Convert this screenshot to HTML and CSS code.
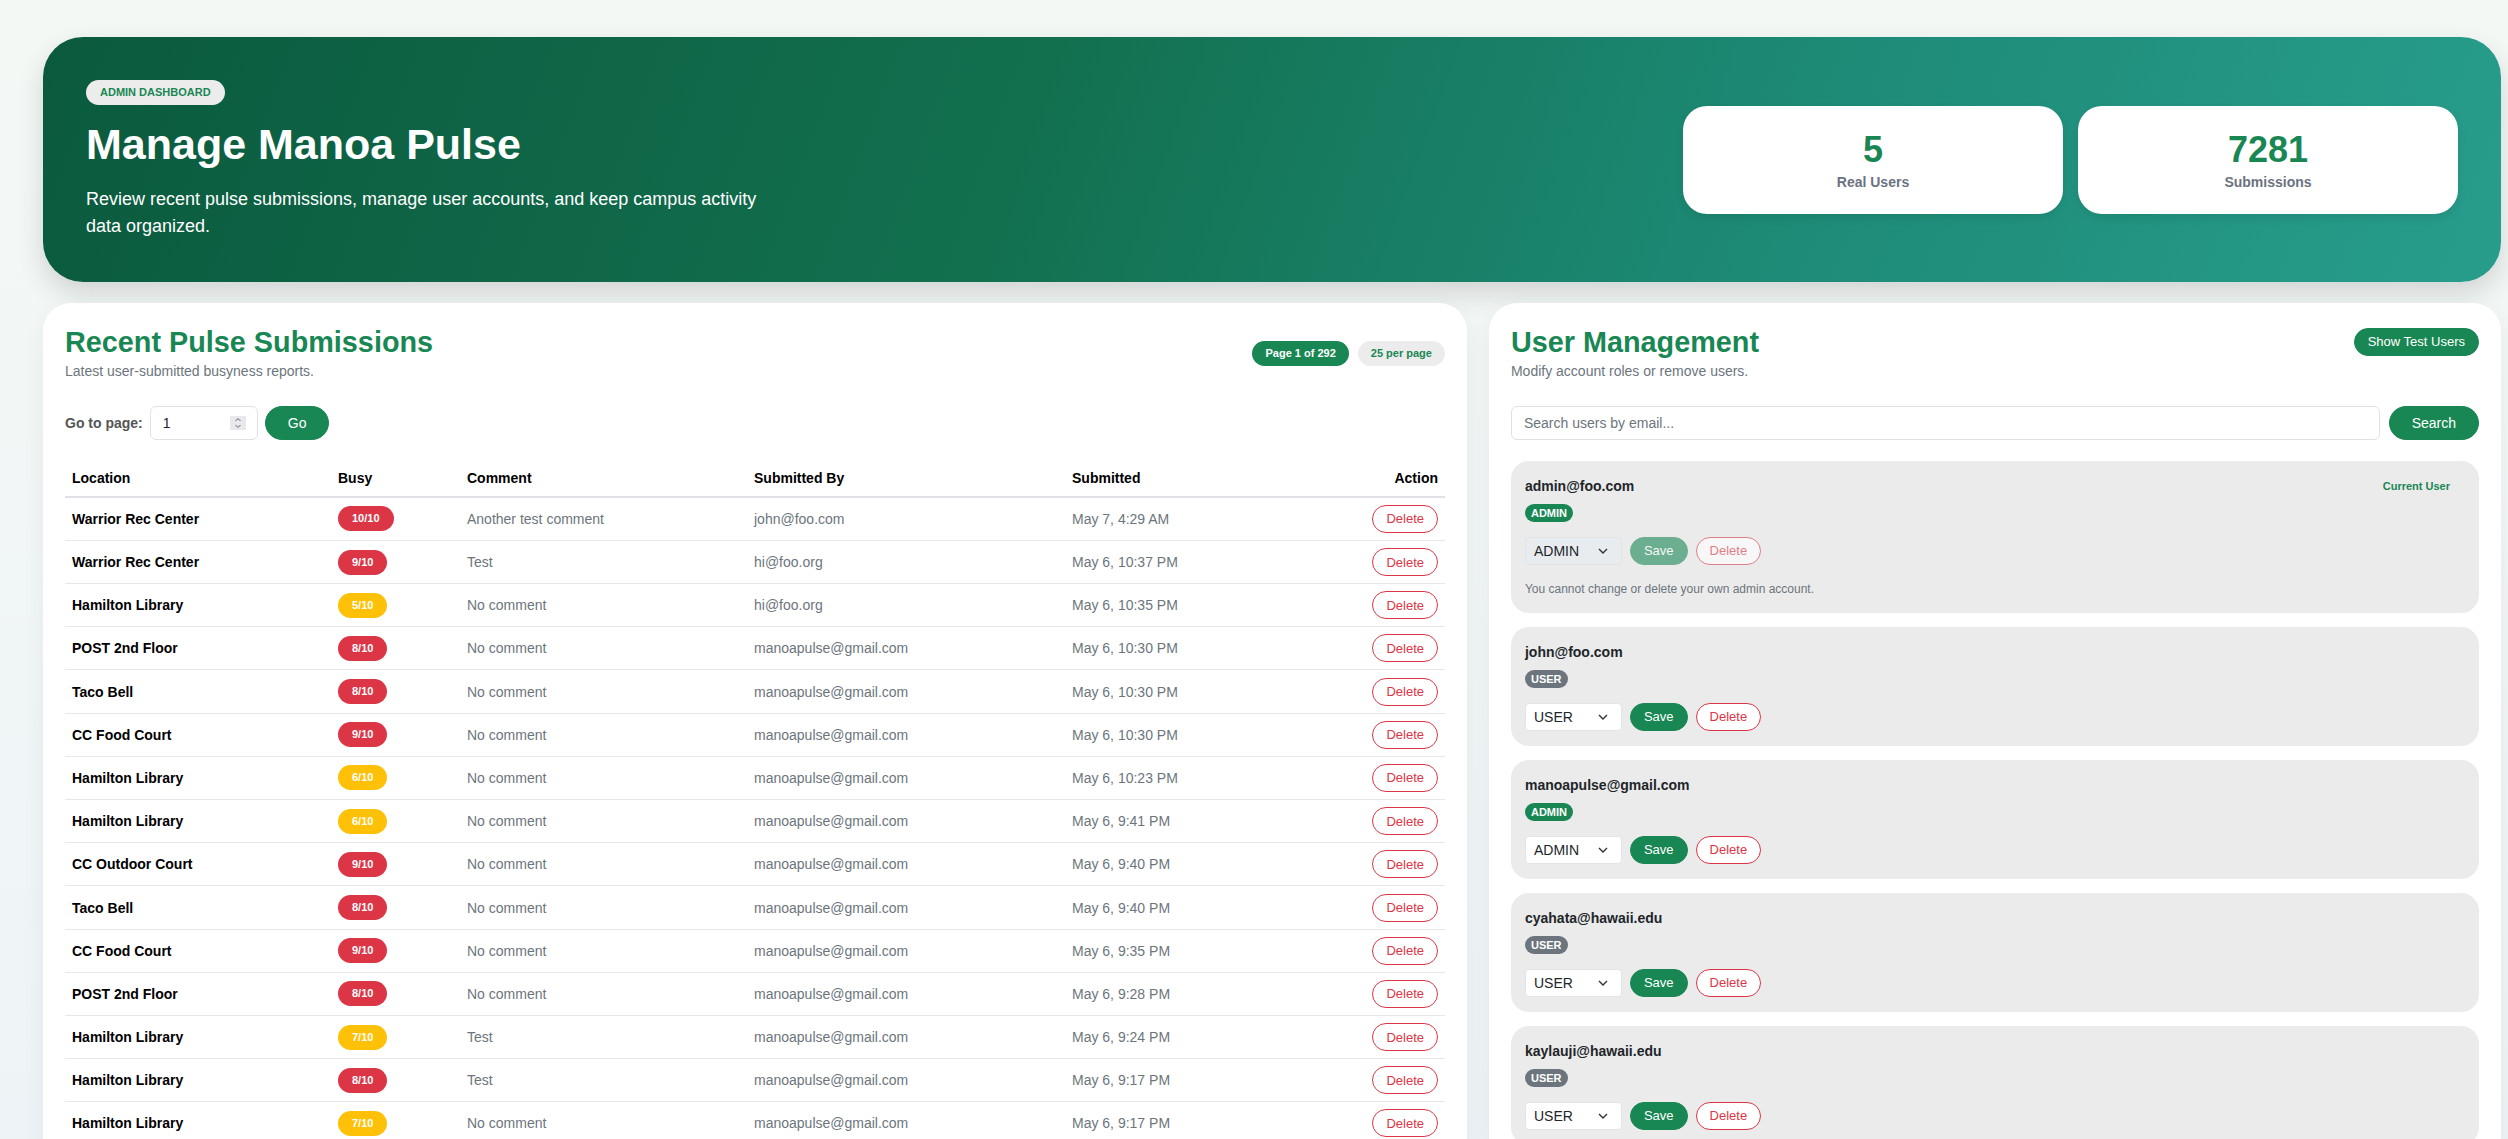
FILE: index.html
```html
<!DOCTYPE html>
<html>
<head>
  <title>Admin Dashboard - Manoa Pulse</title>
  <link rel="stylesheet" href="styles.css">
</head>
<body>
  <div class="page">
    <section class="hero">
      <div class="hero-text">
        <span class="hero-badge">ADMIN DASHBOARD</span>
        <h1>Manage Manoa Pulse</h1>
        <p>Review recent pulse submissions, manage user accounts, and keep campus activity data organized.</p>
      </div>
      <div class="stats">
        <div class="stat-card">
          <div class="stat-value">5</div>
          <div class="stat-label">Real Users</div>
        </div>
        <div class="stat-card">
          <div class="stat-value">7281</div>
          <div class="stat-label">Submissions</div>
        </div>
      </div>
    </section>

    <div class="columns">
      <section class="panel">
        <div class="panel-header">
          <div>
            <h2>Recent Pulse Submissions</h2>
            <p class="panel-sub">Latest user-submitted busyness reports.</p>
          </div>
          <div class="pager-pills">
            <span class="pill pill-green">Page 1 of 292</span>
            <span class="pill pill-grey">25 per page</span>
          </div>
        </div>

        <div class="goto-row">
          <label class="goto-label" for="pageInput">Go to page:</label>
          <span class="number-wrap">
            <input class="goto-input" id="pageInput" type="number" value="1" min="1" max="292">
            <svg class="spin" width="16" height="14" viewBox="0 0 16 14"><rect width="16" height="14" fill="#e9e9ed"/><path d="M5.5 5l2.5-2.5 2.5 2.5M5.5 9l2.5 2.5 2.5-2.5" fill="none" stroke="#6b6b6b" stroke-width="1"/></svg>
          </span>
          <button class="btn btn-green btn-wide">Go</button>
        </div>

        <table class="sub-table">
          <colgroup>
            <col style="width: 266px">
            <col style="width: 129px">
            <col style="width: 287px">
            <col style="width: 318px">
            <col style="width: 230px">
            <col style="width: 150px">
          </colgroup>
          <thead>
            <tr>
              <th>Location</th>
              <th>Busy</th>
              <th>Comment</th>
              <th>Submitted By</th>
              <th>Submitted</th>
              <th class="right">Action</th>
            </tr>
          </thead>
          <tbody>
            <tr><td class="loc">Warrior Rec Center</td><td><span class="busy high">10/10</span></td><td class="muted">Another test comment</td><td class="muted">john@foo.com</td><td class="muted">May 7, 4:29 AM</td><td class="right"><button class="btn btn-outline-red">Delete</button></td></tr>
            <tr><td class="loc">Warrior Rec Center</td><td><span class="busy high">9/10</span></td><td class="muted">Test</td><td class="muted">hi@foo.org</td><td class="muted">May 6, 10:37 PM</td><td class="right"><button class="btn btn-outline-red">Delete</button></td></tr>
            <tr><td class="loc">Hamilton Library</td><td><span class="busy mid">5/10</span></td><td class="muted">No comment</td><td class="muted">hi@foo.org</td><td class="muted">May 6, 10:35 PM</td><td class="right"><button class="btn btn-outline-red">Delete</button></td></tr>
            <tr><td class="loc">POST 2nd Floor</td><td><span class="busy high">8/10</span></td><td class="muted">No comment</td><td class="muted">manoapulse@gmail.com</td><td class="muted">May 6, 10:30 PM</td><td class="right"><button class="btn btn-outline-red">Delete</button></td></tr>
            <tr><td class="loc">Taco Bell</td><td><span class="busy high">8/10</span></td><td class="muted">No comment</td><td class="muted">manoapulse@gmail.com</td><td class="muted">May 6, 10:30 PM</td><td class="right"><button class="btn btn-outline-red">Delete</button></td></tr>
            <tr><td class="loc">CC Food Court</td><td><span class="busy high">9/10</span></td><td class="muted">No comment</td><td class="muted">manoapulse@gmail.com</td><td class="muted">May 6, 10:30 PM</td><td class="right"><button class="btn btn-outline-red">Delete</button></td></tr>
            <tr><td class="loc">Hamilton Library</td><td><span class="busy mid">6/10</span></td><td class="muted">No comment</td><td class="muted">manoapulse@gmail.com</td><td class="muted">May 6, 10:23 PM</td><td class="right"><button class="btn btn-outline-red">Delete</button></td></tr>
            <tr><td class="loc">Hamilton Library</td><td><span class="busy mid">6/10</span></td><td class="muted">No comment</td><td class="muted">manoapulse@gmail.com</td><td class="muted">May 6, 9:41 PM</td><td class="right"><button class="btn btn-outline-red">Delete</button></td></tr>
            <tr><td class="loc">CC Outdoor Court</td><td><span class="busy high">9/10</span></td><td class="muted">No comment</td><td class="muted">manoapulse@gmail.com</td><td class="muted">May 6, 9:40 PM</td><td class="right"><button class="btn btn-outline-red">Delete</button></td></tr>
            <tr><td class="loc">Taco Bell</td><td><span class="busy high">8/10</span></td><td class="muted">No comment</td><td class="muted">manoapulse@gmail.com</td><td class="muted">May 6, 9:40 PM</td><td class="right"><button class="btn btn-outline-red">Delete</button></td></tr>
            <tr><td class="loc">CC Food Court</td><td><span class="busy high">9/10</span></td><td class="muted">No comment</td><td class="muted">manoapulse@gmail.com</td><td class="muted">May 6, 9:35 PM</td><td class="right"><button class="btn btn-outline-red">Delete</button></td></tr>
            <tr><td class="loc">POST 2nd Floor</td><td><span class="busy high">8/10</span></td><td class="muted">No comment</td><td class="muted">manoapulse@gmail.com</td><td class="muted">May 6, 9:28 PM</td><td class="right"><button class="btn btn-outline-red">Delete</button></td></tr>
            <tr><td class="loc">Hamilton Library</td><td><span class="busy mid">7/10</span></td><td class="muted">Test</td><td class="muted">manoapulse@gmail.com</td><td class="muted">May 6, 9:24 PM</td><td class="right"><button class="btn btn-outline-red">Delete</button></td></tr>
            <tr><td class="loc">Hamilton Library</td><td><span class="busy high">8/10</span></td><td class="muted">Test</td><td class="muted">manoapulse@gmail.com</td><td class="muted">May 6, 9:17 PM</td><td class="right"><button class="btn btn-outline-red">Delete</button></td></tr>
            <tr><td class="loc">Hamilton Library</td><td><span class="busy mid">7/10</span></td><td class="muted">No comment</td><td class="muted">manoapulse@gmail.com</td><td class="muted">May 6, 9:17 PM</td><td class="right"><button class="btn btn-outline-red">Delete</button></td></tr>
          </tbody>
        </table>
      </section>

      <section class="panel">
        <div class="panel-header top">
          <div>
            <h2>User Management</h2>
            <p class="panel-sub">Modify account roles or remove users.</p>
          </div>
          <button class="btn btn-green">Show Test Users</button>
        </div>

        <div class="search-row">
          <input class="search-input" type="text" placeholder="Search users by email...">
          <button class="btn btn-green btn-wide">Search</button>
        </div>

        <div class="user-list">
          <div class="user-card">
            <div class="user-top">
              <span class="user-email">admin@foo.com</span>
              <span class="current-user">Current User</span>
            </div>
            <span class="role role-admin">ADMIN</span>
            <div class="user-actions">
              <span class="select-wrap">
                <select class="role-select" disabled><option>ADMIN</option><option>USER</option></select>
                <svg class="chev" width="10" height="6" viewBox="0 0 10 6"><path d="M1 1l4 4 4-4" fill="none" stroke="#333" stroke-width="1.4"/></svg>
              </span>
              <button class="btn btn-green faded">Save</button>
              <button class="btn btn-outline-red faded">Delete</button>
            </div>
            <p class="user-note">You cannot change or delete your own admin account.</p>
          </div>

          <div class="user-card">
            <div class="user-top"><span class="user-email">john@foo.com</span></div>
            <span class="role role-user">USER</span>
            <div class="user-actions">
              <span class="select-wrap">
                <select class="role-select"><option>USER</option><option>ADMIN</option></select>
                <svg class="chev" width="10" height="6" viewBox="0 0 10 6"><path d="M1 1l4 4 4-4" fill="none" stroke="#333" stroke-width="1.4"/></svg>
              </span>
              <button class="btn btn-green">Save</button>
              <button class="btn btn-outline-red">Delete</button>
            </div>
          </div>

          <div class="user-card">
            <div class="user-top"><span class="user-email">manoapulse@gmail.com</span></div>
            <span class="role role-admin">ADMIN</span>
            <div class="user-actions">
              <span class="select-wrap">
                <select class="role-select"><option>ADMIN</option><option>USER</option></select>
                <svg class="chev" width="10" height="6" viewBox="0 0 10 6"><path d="M1 1l4 4 4-4" fill="none" stroke="#333" stroke-width="1.4"/></svg>
              </span>
              <button class="btn btn-green">Save</button>
              <button class="btn btn-outline-red">Delete</button>
            </div>
          </div>

          <div class="user-card">
            <div class="user-top"><span class="user-email">cyahata@hawaii.edu</span></div>
            <span class="role role-user">USER</span>
            <div class="user-actions">
              <span class="select-wrap">
                <select class="role-select"><option>USER</option><option>ADMIN</option></select>
                <svg class="chev" width="10" height="6" viewBox="0 0 10 6"><path d="M1 1l4 4 4-4" fill="none" stroke="#333" stroke-width="1.4"/></svg>
              </span>
              <button class="btn btn-green">Save</button>
              <button class="btn btn-outline-red">Delete</button>
            </div>
          </div>

          <div class="user-card">
            <div class="user-top"><span class="user-email">kaylauji@hawaii.edu</span></div>
            <span class="role role-user">USER</span>
            <div class="user-actions">
              <span class="select-wrap">
                <select class="role-select"><option>USER</option><option>ADMIN</option></select>
                <svg class="chev" width="10" height="6" viewBox="0 0 10 6"><path d="M1 1l4 4 4-4" fill="none" stroke="#333" stroke-width="1.4"/></svg>
              </span>
              <button class="btn btn-green">Save</button>
              <button class="btn btn-outline-red">Delete</button>
            </div>
          </div>
        </div>
      </section>
    </div>
  </div>
</body>
</html>
```

FILE: styles.css
```css
body {
  margin: 0;
  font-family: "Liberation Sans", Arial, sans-serif;
  color: #212529;
  background: linear-gradient(180deg, #f4f8f5 0%, #eef3f7 100%);
  min-height: 100vh;
}

.page {
  padding: 37px 7px 40px 43px;
}

/* hero */
.hero {
  display: flex;
  align-items: center;
  justify-content: space-between;
  padding: 43px 43px 42px 43px;
  border-radius: 40px;
  background: linear-gradient(110deg, #0b5a3e 0%, #12704f 40%, #1d8a76 70%, #289d8c 100%);
  box-shadow: 0 12px 28px rgba(0, 0, 0, 0.14);
  color: white;
}

.hero-text {
  max-width: 690px;
}

.hero-badge {
  display: inline-block;
  height: 25px;
  line-height: 25px;
  padding: 0 14px;
  border-radius: 13px;
  background-color: #ececec;
  color: #198754;
  font-size: 11px;
  font-weight: bold;
}

.hero h1 {
  margin: 14px 0 0;
  font-size: 43px;
  line-height: 1.2;
  font-weight: bold;
}

.hero p {
  margin: 15px 0 0;
  font-size: 18px;
  line-height: 27px;
}

.stats {
  display: flex;
  gap: 15px;
}

.stat-card {
  width: 380px;
  height: 108px;
  box-sizing: border-box;
  background-color: white;
  border-radius: 24px;
  display: flex;
  flex-direction: column;
  align-items: center;
  justify-content: center;
  box-shadow: 0 4px 10px rgba(0, 0, 0, 0.08);
}

.stat-value {
  font-size: 36px;
  line-height: 1.2;
  font-weight: bold;
  color: #198754;
}

.stat-label {
  margin-top: 3px;
  font-size: 14px;
  line-height: 1.2;
  font-weight: bold;
  color: #6b7280;
}

/* columns */
.columns {
  display: grid;
  grid-template-columns: minmax(0, 1.407fr) minmax(0, 1fr);
  gap: 22px;
  margin-top: 21px;
  align-items: start;
}

.panel {
  background-color: white;
  border-radius: 28px;
  padding: 22px 22px 22px;
  box-shadow: 0 8px 24px rgba(0, 0, 0, 0.06);
}

.panel-header {
  display: flex;
  justify-content: space-between;
  align-items: center;
}

.panel-header.top {
  align-items: flex-start;
}

.panel h2 {
  margin: 0;
  font-size: 28.8px;
  line-height: 1.2;
  color: #198754;
}

.panel-sub {
  margin: 3px 0 0;
  font-size: 14px;
  line-height: 1.4;
  color: #6c757d;
}

.panel-header.top .btn {
  margin-top: 3px;
}

.pager-pills {
  display: flex;
  gap: 9px;
}

.pill {
  height: 25px;
  line-height: 25px;
  padding: 0 13px;
  border-radius: 13px;
  font-size: 11px;
  font-weight: bold;
}

.pill-green {
  background-color: #198754;
  color: white;
}

.pill-grey {
  background-color: #ececec;
  color: #198754;
}

/* buttons */
.btn {
  height: 28px;
  padding: 0 13px;
  border-radius: 14px;
  border: 1px solid transparent;
  font-family: "Liberation Sans", Arial, sans-serif;
  font-size: 13px;
  cursor: pointer;
}

.btn-green {
  background-color: #198754;
  border-color: #198754;
  color: white;
}

.btn-wide {
  height: 34px;
  padding: 0 22px;
  border-radius: 17px;
  font-size: 14px;
}

.btn-outline-red {
  background-color: white;
  border-color: #dc3545;
  color: #dc3545;
}

.btn.faded {
  opacity: 0.6;
}

/* go to page */
.goto-row {
  display: flex;
  align-items: center;
  gap: 7px;
  margin-top: 24px;
}

.goto-label {
  font-size: 14px;
  font-weight: bold;
  color: #555;
}

.number-wrap {
  position: relative;
  display: inline-block;
  height: 34px;
}

.goto-input {
  width: 108px;
  height: 34px;
  box-sizing: border-box;
  padding: 0 12px;
  border: 1px solid #dee2e6;
  border-radius: 6px;
  font-family: "Liberation Sans", Arial, sans-serif;
  font-size: 14px;
  color: #212529;
}

.goto-input::-webkit-inner-spin-button,
.goto-input::-webkit-outer-spin-button {
  -webkit-appearance: none;
  margin: 0;
}

.spin {
  position: absolute;
  right: 12px;
  top: 10px;
  pointer-events: none;
}

/* table */
.sub-table {
  width: 100%;
  margin-top: 20px;
  border-collapse: collapse;
  table-layout: fixed;
  font-size: 14px;
}

.sub-table th {
  text-align: left;
  padding: 10px 7px;
  line-height: 16px;
  font-weight: bold;
  color: #000;
  border-bottom: 2px solid #dee2e6;
}

.sub-table td {
  height: 42.2px;
  padding: 0 7px;
  border-bottom: 1px solid #e5e7eb;
  vertical-align: middle;
  white-space: nowrap;
}

.sub-table .right {
  text-align: right;
}

.sub-table .loc {
  font-weight: bold;
  color: #000;
}

.sub-table .muted {
  color: #6c757d;
}

.busy {
  display: inline-block;
  height: 25px;
  line-height: 25px;
  padding: 0 14px;
  border-radius: 13px;
  font-size: 11px;
  font-weight: bold;
  color: white;
}

.busy.high {
  background-color: #dc3545;
}

.busy.mid {
  background-color: #ffc107;
}

/* users */
.search-row {
  display: flex;
  gap: 9px;
  margin-top: 24px;
}

.search-input {
  flex: 1;
  height: 34px;
  box-sizing: border-box;
  padding: 0 12px;
  border: 1px solid #dee2e6;
  border-radius: 6px;
  font-family: "Liberation Sans", Arial, sans-serif;
  font-size: 14px;
}

.search-input::placeholder {
  color: #6c757d;
}

.user-list {
  margin-top: 21px;
  display: flex;
  flex-direction: column;
  gap: 14px;
}

.user-card {
  background-color: #ebebeb;
  border-radius: 18px;
  padding: 15px 14px;
  display: flex;
  flex-direction: column;
  align-items: flex-start;
}

.user-top {
  align-self: stretch;
  display: flex;
  justify-content: space-between;
  align-items: center;
}

.user-email {
  font-size: 14px;
  line-height: 20px;
  font-weight: bold;
  color: #212529;
}

.current-user {
  margin-right: 15px;
  font-size: 11px;
  font-weight: bold;
  color: #198754;
}

.role {
  margin-top: 8px;
  height: 18px;
  line-height: 18px;
  padding: 0 6px;
  border-radius: 9px;
  font-size: 11px;
  font-weight: bold;
  color: white;
}

.role-admin {
  background-color: #198754;
}

.role-user {
  background-color: #6c757d;
}

.user-actions {
  margin-top: 15px;
  display: flex;
  align-items: center;
  gap: 8px;
}

.select-wrap {
  position: relative;
  display: inline-block;
  height: 28px;
}

.role-select {
  appearance: none;
  width: 97px;
  height: 28px;
  padding: 0 8px;
  border: 1px solid #e2e5e8;
  border-radius: 4px;
  background-color: white;
  font-family: "Liberation Sans", Arial, sans-serif;
  font-size: 14px;
  color: #212529;
  opacity: 1;
}

.role-select:disabled {
  background-color: #e9ecef;
  color: #212529;
}

.chev {
  position: absolute;
  right: 14px;
  top: 11px;
  pointer-events: none;
}

.user-note {
  margin: 15px 0 0;
  font-size: 12px;
  line-height: 18px;
  color: #6c757d;
}
```
